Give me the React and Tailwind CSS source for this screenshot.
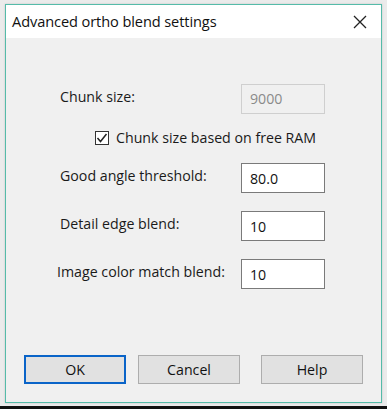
import { useState } from "react";

// one label + textbox row of the settings form
function FieldRow({ label, value, disabled, labelPad = "pl-[54px]", className = "" }) {
   return (
      <div className={`flex items-center justify-between pr-[56px] ${labelPad} ${className}`}>
         <span className="text-[14.2px] text-[#1a1a1a] -mt-[5px]">{label}</span>
         <div
            className={`w-[84px] h-[30px] flex items-center px-[8px] text-[14.2px] border ${
               disabled
                  ? "border-[#cfcfcf] bg-[#f0f0f0] text-[#8a8a8a]"
                  : "border-[#7a7a7a] bg-white text-[#111]"
            }`}
         >
            {value}
         </div>
      </div>
   );
}

function DialogButton({ children, primary, className = "" }) {
   return (
      <button
         className={`w-[102px] h-[29px] text-[14.2px] text-[#111] bg-[#e1e1e1] ${
            primary ? "border-2 border-[#0a64c8]" : "border border-[#adadad]"
         } ${className}`}
      >
         {children}
      </button>
   );
}

export default function App() {
   const [freeRam, setFreeRam] = useState(true);

   return (
      <div
         className="w-[387px] h-[409px] bg-[#ebebeb] flex flex-col"
         style={{ fontFamily: '"Open Sans", "Noto Sans", sans-serif' }}
      >
         <div className="flex-1 pt-[4px] pl-[5px] pr-[5px] pb-[3px]">
            <div className="h-full border border-[#55bba9] flex flex-col shadow-[0_0_2px_rgba(0,0,0,0.15)]">
               {/* title bar */}
               <div className="h-[33px] bg-white flex items-center justify-between pl-[6px] pr-[14px]">
                  <span className="text-[14.6px] text-[#111] tracking-[-0.1px]">Advanced ortho blend settings</span>
                  <svg width="14" height="14" viewBox="0 0 14 14">
                     <path d="M1 1 L13 13 M13 1 L1 13" stroke="#222" strokeWidth="1.3" />
                  </svg>
               </div>

               {/* body */}
               <div className="flex-1 bg-[#f0f0f0] flex flex-col">
                  <FieldRow className="mt-[46px]" label="Chunk size:" value="9000" disabled />

                  <label className="flex items-center gap-[7px] pl-[89px] mt-[13px]">
                     <span
                        className="w-[14px] h-[14px] border border-[#333] bg-white flex items-center justify-center"
                        onClick={() => setFreeRam(!freeRam)}
                     >
                        {freeRam && (
                           <svg width="12" height="12" viewBox="0 0 12 12">
                              <path d="M1.5 6 L4.5 9.5 L10.5 2" fill="none" stroke="#222" strokeWidth="1.5" />
                           </svg>
                        )}
                     </span>
                     <span className="text-[14.2px] text-[#1a1a1a]">Chunk size based on free RAM</span>
                  </label>

                  <FieldRow className="mt-[15px]" label="Good angle threshold:" value="80.0" />
                  <FieldRow className="mt-[18px]" label="Detail edge blend:" value="10" />
                  <FieldRow className="mt-[18px]" label="Image color match blend:" value="10" labelPad="pl-[51px]" />

                  {/* buttons */}
                  <div className="flex items-center mt-auto mb-[18px] pl-[18px] gap-[12px]">
                     <DialogButton primary>OK</DialogButton>
                     <DialogButton>Cancel</DialogButton>
                     <DialogButton className="ml-[9px]">Help</DialogButton>
                  </div>
               </div>
            </div>
         </div>
         <div className="h-[3px] bg-[#111]" />
      </div>
   );
}
